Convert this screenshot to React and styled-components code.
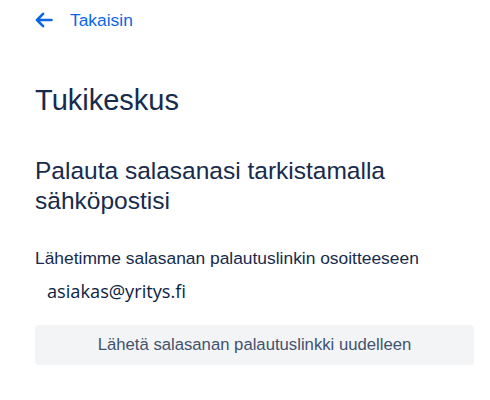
import React from "react";
import styled, { createGlobalStyle } from "styled-components";

const GlobalStyle = createGlobalStyle`
  body {
    margin: 0;
    background: #ffffff;
    font-family: "Liberation Sans", Arial, sans-serif;
  }
`;

const Page = styled.div`
  padding: 0 16px 0 35px;
  display: flex;
  flex-direction: column;
`;

const BackLink = styled.a`
  display: flex;
  align-items: center;
  gap: 17px;
  height: 40px;
  color: #0c66e4;
  font-size: 17.4px;
  text-decoration: none;
  cursor: pointer;
`;

const Title = styled.h1`
  margin: 42px 0 0;
  font-size: 29px;
  font-weight: 400;
  line-height: 36px;
  color: #172b4d;
`;

const Subtitle = styled.h2`
  margin: 38px 0 0;
  font-size: 24.5px;
  font-weight: 400;
  line-height: 30px;
  color: #172b4d;
`;

const Label = styled.p`
  margin: 30px 0 0;
  font-size: 17.4px;
  line-height: 24px;
  color: #172b4d;
`;

const Email = styled.div`
  margin-top: 9px;
  padding-left: 12px;
  font-family: "Open Sans", "Noto Sans", sans-serif;
  font-size: 18.2px;
  line-height: 24px;
  color: #091e42;
`;

const ResendButton = styled.button`
  margin-top: 22px;
  height: 40px;
  border: none;
  border-radius: 4px;
  background: #f3f4f6;
  color: #42526e;
  font-family: "Liberation Sans", Arial, sans-serif;
  font-size: 16.7px;
  cursor: pointer;
`;

const ArrowLeft = () => (
  <svg width="18" height="16" viewBox="0 0 18 16" fill="none">
    <path
      d="M16.5 8H2M8 1.8L2 8l6 6.2"
      stroke="currentColor"
      strokeWidth="2.6"
      strokeLinecap="round"
      strokeLinejoin="round"
    />
  </svg>
);

const App = () => {
  return (
    <>
      <GlobalStyle />
      <Page>
        <BackLink>
          <ArrowLeft />
          Takaisin
        </BackLink>
        <Title>Tukikeskus</Title>
        <Subtitle>Palauta salasanasi tarkistamalla sähköpostisi</Subtitle>
        <Label>Lähetimme salasanan palautuslinkin osoitteeseen</Label>
        <Email>asiakas@yritys.fi</Email>
        <ResendButton>Lähetä salasanan palautuslinkki uudelleen</ResendButton>
      </Page>
    </>
  );
};

export default App;
